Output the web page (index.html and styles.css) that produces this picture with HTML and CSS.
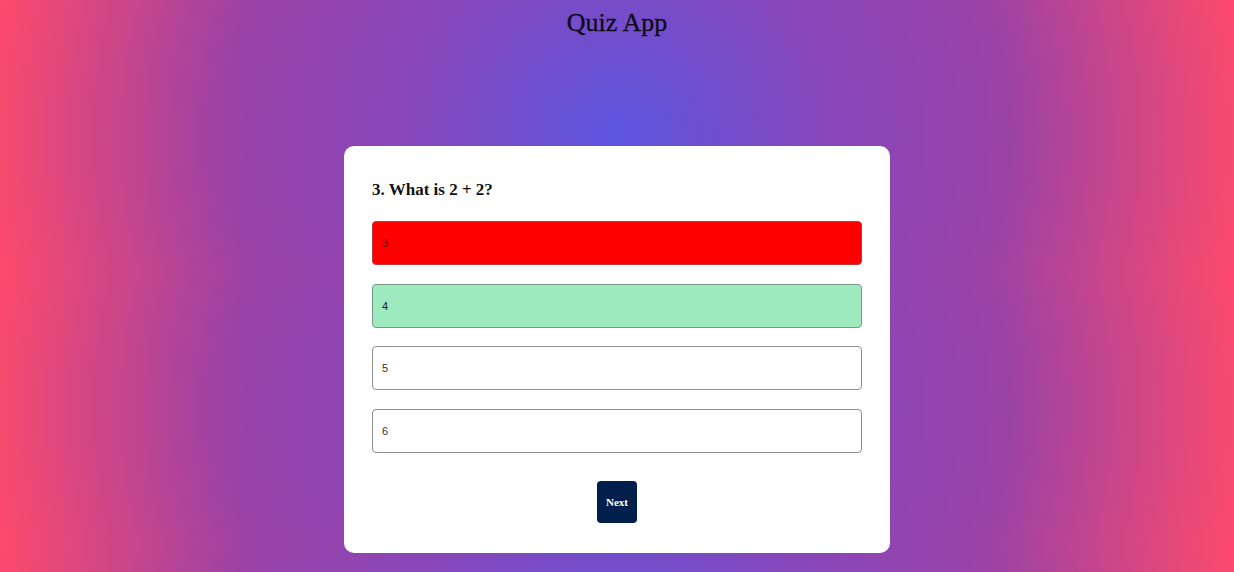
FILE: index.html
```html
<!DOCTYPE html>
<html lang="en">
<head>
<meta charset="utf-8">
<title>Quiz App</title>
<link rel="stylesheet" href="styles.css">
</head>
<body>
  <h1 class="app-title">Quiz App</h1>
  <div class="quiz-card">
    <h2 class="question">3. What is 2 + 2?</h2>
    <div class="answers">
      <button class="answer wrong">3</button>
      <button class="answer correct">4</button>
      <button class="answer">5</button>
      <button class="answer">6</button>
    </div>
    <div class="actions">
      <button class="next-btn">Next</button>
    </div>
  </div>
</body>
</html>
```

FILE: styles.css
```css
html {
  background-color: #8c45b4;
}

body {
  margin: 0;
  font-family: "Liberation Serif", "DejaVu Serif", serif;
  color: #111;
  background-image: radial-gradient(circle, #5b55df 0%, #8647bb 32%, #9b42a6 62%, #fd4a6b 100%);
  background-size: 100% 272px;
  padding-bottom: 20px;
}

.app-title {
  margin: 0;
  padding-top: 8px;
  text-align: center;
  font-size: 26px;
  line-height: 30px;
  font-weight: normal;
  color: #0e0a14;
  -webkit-text-stroke: 0.3px #0e0a14;
}

.quiz-card {
  width: 546px;
  box-sizing: border-box;
  margin: 108px auto 0;
  padding: 34px 28px 30px;
  background: #ffffff;
  border-radius: 10px;
}

.question {
  margin: 0 0 21px;
  font-size: 17px;
  line-height: 20px;
  font-weight: bold;
  color: #111;
}

.answers {
  display: flex;
  flex-direction: column;
  gap: 18.6px;
}

.answer {
  display: block;
  width: 100%;
  height: 44px;
  box-sizing: border-box;
  padding: 0 9px;
  text-align: left;
  font-family: "Liberation Sans", Arial, sans-serif;
  font-size: 11px;
  color: #333;
  background: #ffffff;
  border: 1px solid #8f8f8f;
  border-radius: 4px;
}

.answer.wrong {
  background: #ff0000;
  border-color: #c43a3a;
  color: #6a1010;
}

.answer.correct {
  background: #9deabf;
  border-color: #7a9a88;
  color: #222;
}

.actions {
  display: flex;
  justify-content: center;
  margin-top: 28.5px;
}

.next-btn {
  padding: 14px 9px;
  line-height: 14px;
  font-family: "Liberation Serif", serif;
  font-size: 11px;
  font-weight: bold;
  color: #ffffff;
  background: #001f4d;
  border: none;
  border-radius: 4px;
}
```
